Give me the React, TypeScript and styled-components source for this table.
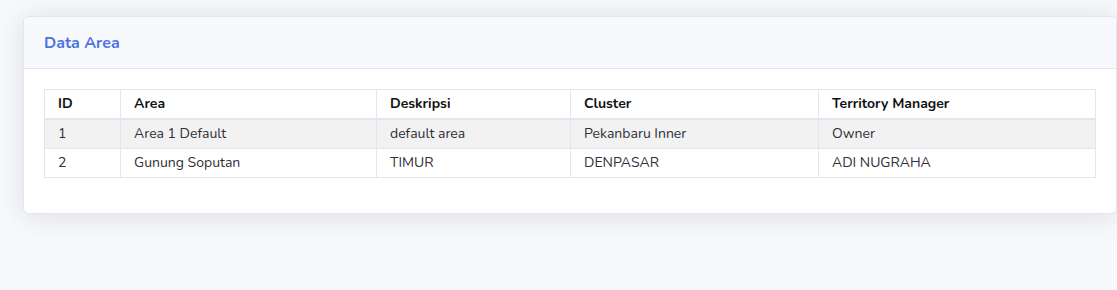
import React from "react";
import styled, { createGlobalStyle } from "styled-components";

const Global = createGlobalStyle`
  html, body { margin: 0; padding: 0; background: #f8f9fc; }
  body { font-family: "Nunito", "Lato", "Noto Sans", sans-serif; }
  * { box-sizing: border-box; }
`;

const Page = styled.div`
  padding: 16px 0 40px 23px;
`;

const Card = styled.div`
  background: #fff;
  border: 1px solid #e3e6f0;
  border-radius: 6px;
  box-shadow: 0 2px 28px 0 rgba(58, 59, 69, 0.15);
  overflow: hidden;
`;

const CardHeader = styled.div`
  background: #f8f9fc;
  border-bottom: 1px solid #e3e6f0;
  height: 52px;
  padding: 0 20px;
  display: flex;
  align-items: center;
`;

const Title = styled.h6`
  margin: 0;
  font-size: 16px;
  font-weight: 700;
  color: #4e73df;
`;

const CardBody = styled.div`
  padding: 20px 20px 35px;
`;

const Table = styled.table`
  width: 100%;
  border-collapse: collapse;
  font-size: 14px;
  color: #3a3b45;
`;

const Th = styled.th<{ w?: number }>`
  text-align: left;
  font-weight: 700;
  color: #111;
  border: 1px solid #e3e6f0;
  border-bottom-width: 2px;
  height: 29px;
  padding: 0 13px;
  width: ${(p) => (p.w ? `${p.w}px` : "auto")};
`;

const Tr = styled.tr<{ striped?: boolean }>`
  background: ${(p) => (p.striped ? "#f2f2f2" : "#fff")};
`;

const Td = styled.td`
  border: 1px solid #e3e6f0;
  height: 29.5px;
  padding: 0 13px;
  color: #2e2f38;
`;

const rows = [
  ["1", "Area 1 Default", "default area", "Pekanbaru Inner", "Owner"],
  ["2", "Gunung Soputan", "TIMUR", "DENPASAR", "ADI NUGRAHA"],
];

export default function App() {
  return (
    <>
      <Global />
      <Page>
        <Card>
          <CardHeader>
            <Title>Data Area</Title>
          </CardHeader>
          <CardBody>
            <Table>
              <thead>
                <tr>
                  <Th w={76}>ID</Th>
                  <Th w={256}>Area</Th>
                  <Th w={194}>Deskripsi</Th>
                  <Th w={248}>Cluster</Th>
                  <Th>Territory Manager</Th>
                </tr>
              </thead>
              <tbody>
                {rows.map((r, i) => (
                  <Tr key={i} striped={i % 2 === 0}>
                    {r.map((c, j) => (
                      <Td key={j}>{c}</Td>
                    ))}
                  </Tr>
                ))}
              </tbody>
            </Table>
          </CardBody>
        </Card>
      </Page>
    </>
  );
}
